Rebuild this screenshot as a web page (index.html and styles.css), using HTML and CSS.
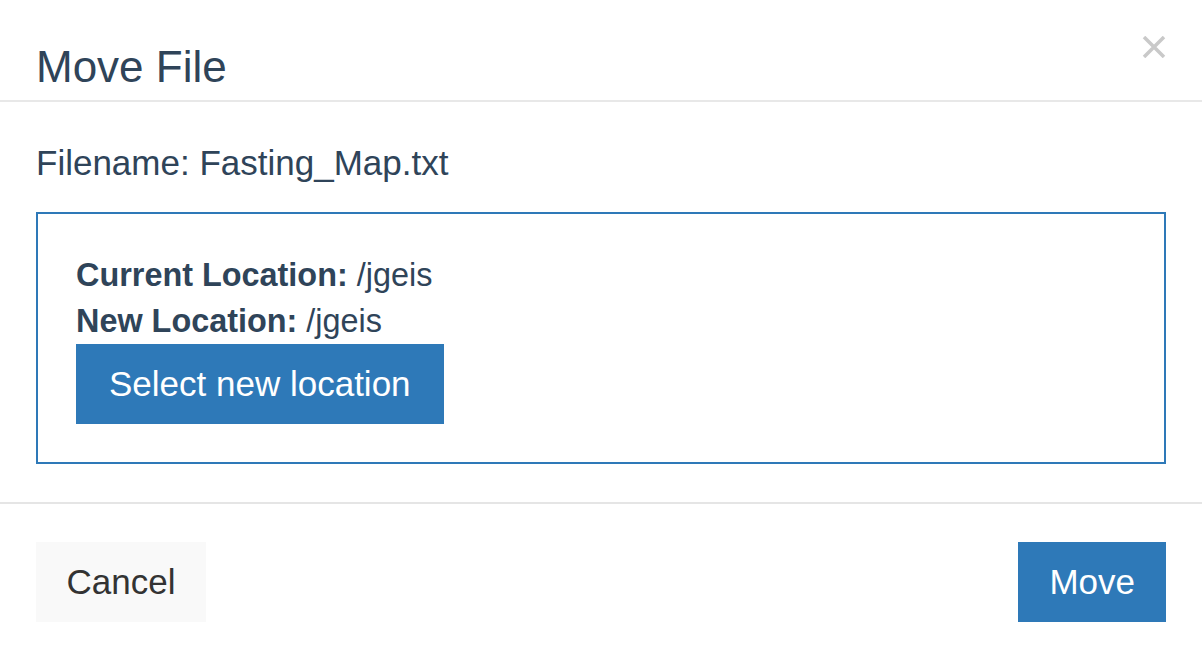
FILE: index.html
```html
<!DOCTYPE html>
<html>
<head>
<meta charset="utf-8">
<link rel="stylesheet" href="styles.css">
</head>
<body>
<div class="modal">
  <div class="modal-header">
    <h4 class="modal-title">Move File</h4>
    <button class="close" type="button" aria-label="Close">
      <svg width="24" height="22" viewBox="0 0 24 22"><path d="M2 1 L22 21 M22 1 L2 21" stroke="#c9c9c9" stroke-width="3.5" fill="none"/></svg>
    </button>
  </div>
  <div class="modal-body">
    <p class="filename">Filename: Fasting_Map.txt</p>
    <div class="location-box">
      <div class="loc-line"><strong>Current Location:</strong> /jgeis</div>
      <div class="loc-line"><strong>New Location:</strong> /jgeis</div>
      <button class="btn btn-primary btn-select" type="button">Select new location</button>
    </div>
  </div>
  <div class="modal-footer">
    <button class="btn btn-default" type="button">Cancel</button>
    <button class="btn btn-primary" type="button">Move</button>
  </div>
</div>
</body>
</html>
```
FILE: styles.css
```css
html, body {
  margin: 0;
  padding: 0;
  background: #ffffff;
}
body {
  font-family: "Liberation Sans", Arial, sans-serif;
  color: #2f4459;
}
.modal {
  width: 1202px;
}
.modal-header {
  display: flex;
  justify-content: space-between;
  align-items: flex-start;
  padding: 43px 36px 9px 36px;
  border-bottom: 2px solid #e8e8e8;
}
.modal-title {
  margin: 0;
  font-size: 44px;
  font-weight: normal;
  line-height: 48px;
  color: #2f4459;
}
.close {
  border: 0;
  background: none;
  padding: 0;
  margin: -7px 0 0 0;
  width: 24px;
  height: 22px;
  display: block;
  cursor: pointer;
}
.close svg {
  display: block;
}
.modal-body {
  padding: 36px 36px 38px 36px;
}
.filename {
  margin: 0 0 24px 0;
  font-size: 35px;
  line-height: 50px;
}
.location-box {
  border: 2px solid #2e79b8;
  padding: 38px 38px 38px 38px;
}
.loc-line {
  font-size: 32.4px;
  line-height: 46px;
}
.loc-line strong {
  font-weight: bold;
}
.btn {
  display: inline-block;
  border: 0;
  margin: 0;
  padding: 0 31px;
  height: 80px;
  font-family: "Liberation Sans", Arial, sans-serif;
  font-size: 35px;
  line-height: 80px;
  cursor: pointer;
}
.btn-primary {
  background: #2e79b8;
  color: #ffffff;
}
.btn-default {
  background: #f9f9f9;
  color: #333333;
  padding: 0 30.5px;
}
.location-box .btn-select {
  display: block;
  padding: 0 33px;
}
.modal-footer {
  display: flex;
  justify-content: space-between;
  padding: 38px 36px 24px 36px;
  border-top: 2px solid #e5e5e5;
}
```
